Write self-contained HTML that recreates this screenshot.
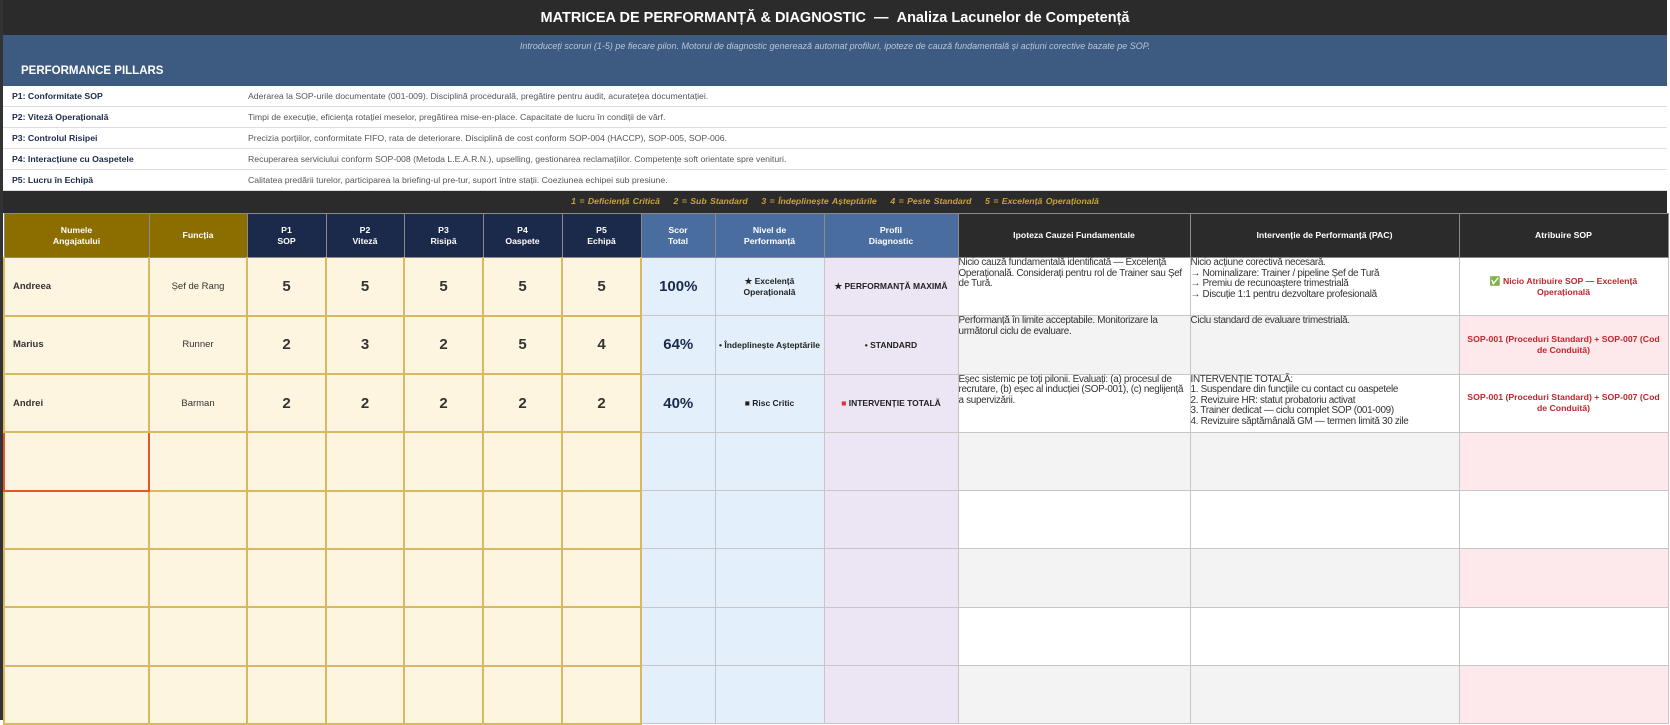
<!DOCTYPE html>
<html><head><meta charset="utf-8">
<style>
*{margin:0;padding:0;box-sizing:border-box}
body{width:1670px;height:720px;overflow:hidden;background:#fff;font-family:"Liberation Sans",sans-serif;position:relative}
.bar{position:absolute;left:3px;width:1664px}
#title{top:0;height:35px;background:#2b2b2b;color:#fff;font-weight:bold;font-size:14.5px;text-align:center;line-height:36px}
#sub{top:35px;height:20px;background:#3d5a80;color:#b9c7da;font-style:italic;font-size:9px;text-align:center;line-height:22px}
#ph{top:55px;height:31px;background:#3d5a80;color:#fff;font-weight:bold;font-size:11.5px;line-height:32px;padding-left:18px}
.pr{position:absolute;left:3px;width:1664px;height:21px;border-bottom:1px solid #ddd;font-size:8.7px;line-height:20px;color:#555}
.pr b{position:absolute;left:9px;color:#1b2a4a}
.pr span{position:absolute;left:245px}
#leg{top:191px;height:22px;background:#2b2b2b;color:#c9a23a;font-style:italic;font-weight:bold;font-size:8.7px;text-align:center;line-height:21px;word-spacing:1px}
table{position:absolute;left:3px;top:213px;border-collapse:collapse;table-layout:fixed;width:1664px}
th{height:44px;font-size:8.7px;color:#fff;font-weight:bold;border:1px solid #8a8a8a;line-height:11px}
th.g{background:#8b6d00}th.n{background:#1b2a4a}th.s{background:#4a6da0}th.d{background:#2b2b2b}
td{height:58.3px;font-size:9.5px;color:#333}
td.y{background:#fdf5e0;border:2px solid #d9b862;text-align:center}
td.nm{text-align:left;padding-left:8px;font-weight:bold;color:#333}
td.sc{font-size:15px;font-weight:bold;color:#333}
td.b{background:#e3f0fb;border:1px solid #c6c6c6;text-align:center}
td.pc{font-size:15px;font-weight:bold;color:#1b2a4a}
td.lv{font-size:8.5px;font-weight:bold;color:#222}
td.p{background:#ece5f3;border:1px solid #c6c6c6;text-align:center;font-size:8.5px;font-weight:bold;color:#222}
td.t{border:1px solid #c6c6c6;vertical-align:top;font-size:9.9px;line-height:10.5px;color:#333;letter-spacing:-0.3px}
td.a{border:1px solid #c6c6c6;text-align:center;font-size:8.7px;font-weight:bold;color:#c0262d;padding:0 4px;line-height:11px}
tr.e td.t{background:#f3f3f3}
tr.e td.a{background:#fde8eb}
tr.first td{border-top:1px solid #111}
</style></head><body>
<div class="bar" id="title">MATRICEA DE PERFORMANȚĂ &amp; DIAGNOSTIC &nbsp;— &nbsp;Analiza Lacunelor de Competență</div>
<div class="bar" id="sub">Introduceți scoruri (1-5) pe fiecare pilon. Motorul de diagnostic generează automat profiluri, ipoteze de cauză fundamentală și acțiuni corective bazate pe SOP.</div>
<div class="bar" id="ph">PERFORMANCE PILLARS</div>
<div class="pr" style="top:86px"><b>P1: Conformitate SOP</b><span>Aderarea la SOP-urile documentate (001-009). Disciplină procedurală, pregătire pentru audit, acuratețea documentației.</span></div>
<div class="pr" style="top:107px"><b>P2: Viteză Operațională</b><span>Timpi de execuție, eficiența rotației meselor, pregătirea mise-en-place. Capacitate de lucru în condiții de vârf.</span></div>
<div class="pr" style="top:128px"><b>P3: Controlul Risipei</b><span>Precizia porțiilor, conformitate FIFO, rata de deteriorare. Disciplină de cost conform SOP-004 (HACCP), SOP-005, SOP-006.</span></div>
<div class="pr" style="top:149px"><b>P4: Interacțiune cu Oaspetele</b><span>Recuperarea serviciului conform SOP-008 (Metoda L.E.A.R.N.), upselling, gestionarea reclamațiilor. Competențe soft orientate spre venituri.</span></div>
<div class="pr" style="top:170px"><b>P5: Lucru în Echipă</b><span>Calitatea predării turelor, participarea la briefing-ul pre-tur, suport între stații. Coeziunea echipei sub presiune.</span></div>
<div class="bar" id="leg">1 = Deficiență Critică &nbsp;&nbsp; 2 = Sub Standard &nbsp;&nbsp; 3 = Îndeplinește Așteptările &nbsp;&nbsp; 4 = Peste Standard &nbsp;&nbsp; 5 = Excelență Operațională</div>
<table>
<colgroup><col style="width:145px"><col style="width:98px"><col style="width:79px"><col style="width:78px"><col style="width:79px"><col style="width:79px"><col style="width:79px"><col style="width:74px"><col style="width:109px"><col style="width:134px"><col style="width:232px"><col style="width:269px"><col style="width:209px"></colgroup>
<tr><th class="g">Numele<br>Angajatului</th><th class="g">Funcția</th><th class="n">P1<br>SOP</th><th class="n">P2<br>Viteză</th><th class="n">P3<br>Risipă</th><th class="n">P4<br>Oaspete</th><th class="n">P5<br>Echipă</th><th class="s">Scor<br>Total</th><th class="s">Nivel de<br>Performanță</th><th class="s">Profil<br>Diagnostic</th><th class="d">Ipoteza Cauzei Fundamentale</th><th class="d">Intervenție de Performanță (PAC)</th><th class="d">Atribuire SOP</th></tr>
<tr class="first"><td class="y nm">Andreea</td><td class="y">Șef de Rang</td><td class="y sc">5</td><td class="y sc">5</td><td class="y sc">5</td><td class="y sc">5</td><td class="y sc">5</td><td class="b pc">100%</td><td class="b lv">★ Excelență<br>Operațională</td><td class="p">★ PERFORMANȚĂ MAXIMĂ</td><td class="t">Nicio cauză fundamentală identificată — Excelență Operațională. Considerați pentru rol de Trainer sau Șef de Tură.</td><td class="t">Nicio acțiune corectivă necesară.<br>→ Nominalizare: Trainer / pipeline Șef de Tură<br>→ Premiu de recunoaștere trimestrială<br>→ Discuție 1:1 pentru dezvoltare profesională</td><td class="a" style="color:#c0262d">✅ Nicio Atribuire SOP — Excelență Operațională</td></tr>
<tr class="e"><td class="y nm">Marius</td><td class="y">Runner</td><td class="y sc">2</td><td class="y sc">3</td><td class="y sc">2</td><td class="y sc">5</td><td class="y sc">4</td><td class="b pc">64%</td><td class="b lv">• Îndeplinește Așteptările</td><td class="p">• STANDARD</td><td class="t">Performanță în limite acceptabile. Monitorizare la următorul ciclu de evaluare.</td><td class="t">Ciclu standard de evaluare trimestrială.</td><td class="a">SOP-001 (Proceduri Standard) + SOP-007 (Cod de Conduită)</td></tr>
<tr><td class="y nm">Andrei</td><td class="y">Barman</td><td class="y sc">2</td><td class="y sc">2</td><td class="y sc">2</td><td class="y sc">2</td><td class="y sc">2</td><td class="b pc">40%</td><td class="b lv">■ Risc Critic</td><td class="p"><span style="color:#d33">■</span> INTERVENȚIE TOTALĂ</td><td class="t">Eșec sistemic pe toți pilonii. Evaluați: (a) procesul de recrutare, (b) eșec al inducției (SOP-001), (c) neglijență a supervizării.</td><td class="t">INTERVENȚIE TOTALĂ:<br>1. Suspendare din funcțiile cu contact cu oaspetele<br>2. Revizuire HR: statut probatoriu activat<br>3. Trainer dedicat — ciclu complet SOP (001-009)<br>4. Revizuire săptămânală GM — termen limită 30 zile</td><td class="a">SOP-001 (Proceduri Standard) + SOP-007 (Cod de Conduită)</td></tr>
<tr class="e"><td class="y" style="border:2px solid #e0582a"></td><td class="y"></td><td class="y"></td><td class="y"></td><td class="y"></td><td class="y"></td><td class="y"></td><td class="b"></td><td class="b"></td><td class="p"></td><td class="t"></td><td class="t"></td><td class="a"></td></tr>
<tr><td class="y"></td><td class="y"></td><td class="y"></td><td class="y"></td><td class="y"></td><td class="y"></td><td class="y"></td><td class="b"></td><td class="b"></td><td class="p"></td><td class="t"></td><td class="t"></td><td class="a"></td></tr>
<tr class="e"><td class="y"></td><td class="y"></td><td class="y"></td><td class="y"></td><td class="y"></td><td class="y"></td><td class="y"></td><td class="b"></td><td class="b"></td><td class="p"></td><td class="t"></td><td class="t"></td><td class="a"></td></tr>
<tr><td class="y"></td><td class="y"></td><td class="y"></td><td class="y"></td><td class="y"></td><td class="y"></td><td class="y"></td><td class="b"></td><td class="b"></td><td class="p"></td><td class="t"></td><td class="t"></td><td class="a"></td></tr>
<tr class="e"><td class="y"></td><td class="y"></td><td class="y"></td><td class="y"></td><td class="y"></td><td class="y"></td><td class="y"></td><td class="b"></td><td class="b"></td><td class="p"></td><td class="t"></td><td class="t"></td><td class="a"></td></tr>
</table>
<div style="position:absolute;left:0;top:0;width:3px;height:720px;background:#333"></div>
</body></html>
